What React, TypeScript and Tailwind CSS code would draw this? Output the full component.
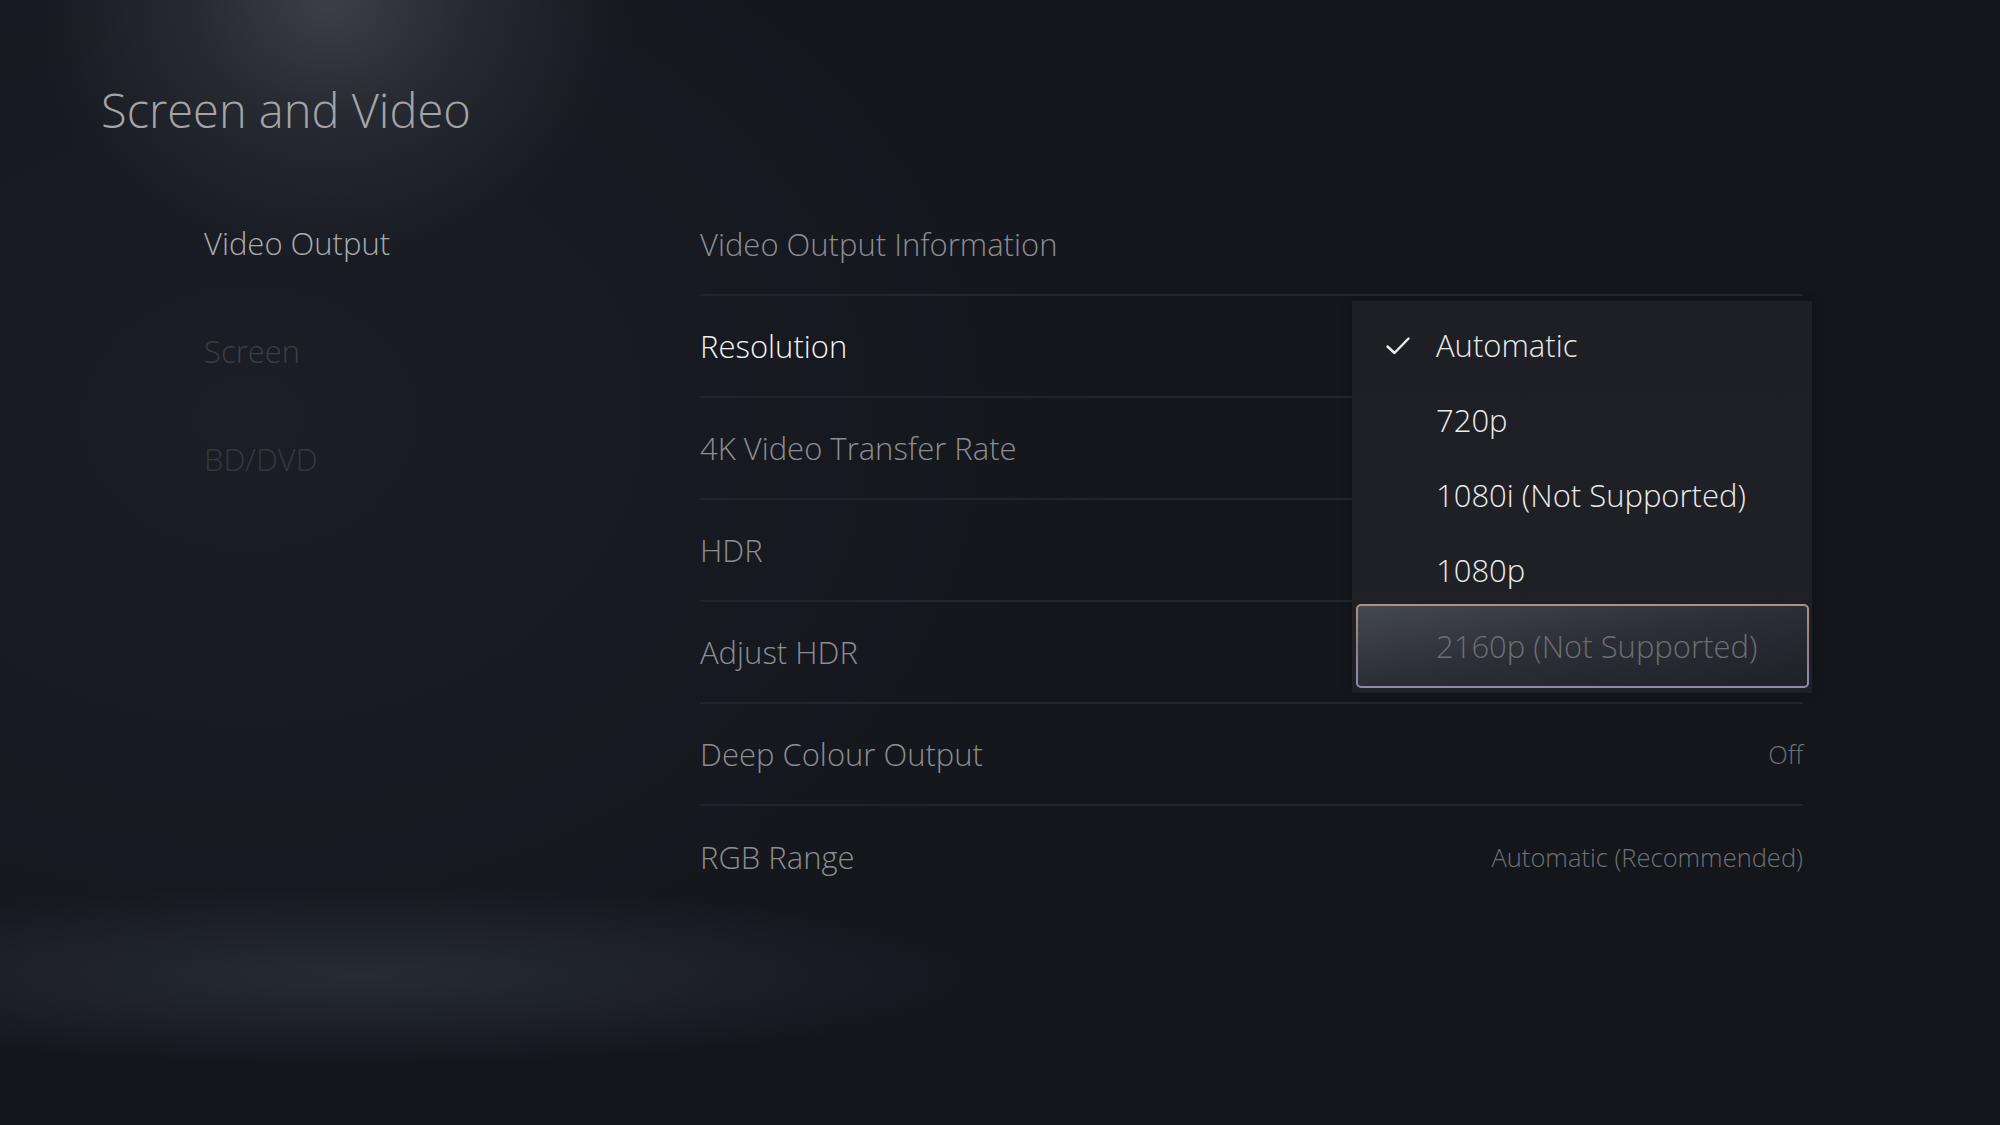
import React from "react";

type Row = { label: string; value?: string; active?: boolean };

const rows: Row[] = [
  { label: "Video Output Information" },
  { label: "Resolution", active: true },
  { label: "4K Video Transfer Rate" },
  { label: "HDR" },
  { label: "Adjust HDR" },
  { label: "Deep Colour Output", value: "Off" },
  { label: "RGB Range", value: "Automatic (Recommended)" },
];

const navItems = [
  { label: "Video Output", cls: "text-[#a9abaf]" },
  { label: "Screen", cls: "text-[#3b3e45]" },
  { label: "BD/DVD", cls: "text-[#34373e]" },
];

const options = [
  { label: "Automatic", checked: true },
  { label: "720p" },
  { label: "1080i (Not Supported)" },
  { label: "1080p" },
];

function Check() {
  return (
    <svg width="24" height="18" viewBox="0 0 24 18" fill="none" aria-hidden>
      <path d="M1.5 9.5 L8.5 16 L22.5 1.5" stroke="#ececec" strokeWidth="2.4" strokeLinecap="round" strokeLinejoin="round" />
    </svg>
  );
}

function ResolutionMenu() {
  return (
    <div className="absolute left-[652px] top-[112px] w-[460px] h-[392px] bg-gradient-to-b from-[#1d1f25] to-[#1f2126] pt-[7px] shadow-[0_0_10px_rgba(0,0,0,0.25)]">
      {options.map((o) => (
        <div key={o.label} className="flex h-[75px] items-center pl-[34px]">
          <div className="w-[24px]">{o.checked && <Check />}</div>
          <span className="ml-[26px] text-[31px] font-light leading-none text-[#ebebeb]">{o.label}</span>
        </div>
      ))}
      <div className="-mt-[4px] ml-[4px] mr-[3px] h-[84px] rounded-[5px] bg-gradient-to-b from-[#b3917f] via-[#8f8288] to-[#9288aa] p-[2px]">
        <div className="flex h-full items-center rounded-[3px] bg-gradient-to-br from-[#444850] via-[#2b2e35] to-[#1f2127] pl-[78px]">
          <span className="text-[31px] font-light leading-none text-[#6c6e73]">2160p (Not Supported)</span>
        </div>
      </div>
    </div>
  );
}

export default function App() {
  return (
    <div
      className="relative h-[1125px] w-[2000px] overflow-hidden bg-[#14161c] bg-[radial-gradient(ellipse_300px_260px_at_330px_0px,#3d3f47_0%,#272a31_45%,transparent_100%),radial-gradient(ellipse_650px_90px_at_360px_975px,#262b35_0%,transparent_100%),radial-gradient(ellipse_900px_700px_at_250px_420px,#1b1e25_0%,transparent_100%)] pt-[80px]"
      style={{ fontFamily: '"Open Sans", "Noto Sans", sans-serif' }}
    >
      <h1 className="pl-[101px] text-[47px] font-light leading-[60px] text-[#a2a4a8]">Screen and Video</h1>

      <div className="mt-[49px] flex">
        <nav className="ml-[204px] w-[496px] flex flex-col">
          {navItems.map((n) => (
            <div key={n.label} className={`flex h-[108px] items-center text-[31px] font-light ${n.cls}`}>
              {n.label}
            </div>
          ))}
        </nav>

        <div className="relative w-[1103px] pt-[5px]">
          {rows.map((r, i) => (
            <div
              key={r.label}
              className={`flex h-[102px] items-center justify-between ${i < rows.length - 1 ? "border-b-2 border-[#22252b]" : ""}`}
            >
              <span className={`text-[31px] font-light ${r.active ? "text-[#f3f3f3]" : "text-[#8b8d92]"}`}>{r.label}</span>
              {r.value && <span className="text-[25.5px] font-light text-[#6f7176]">{r.value}</span>}
            </div>
          ))}
          <ResolutionMenu />
        </div>
      </div>
    </div>
  );
}
